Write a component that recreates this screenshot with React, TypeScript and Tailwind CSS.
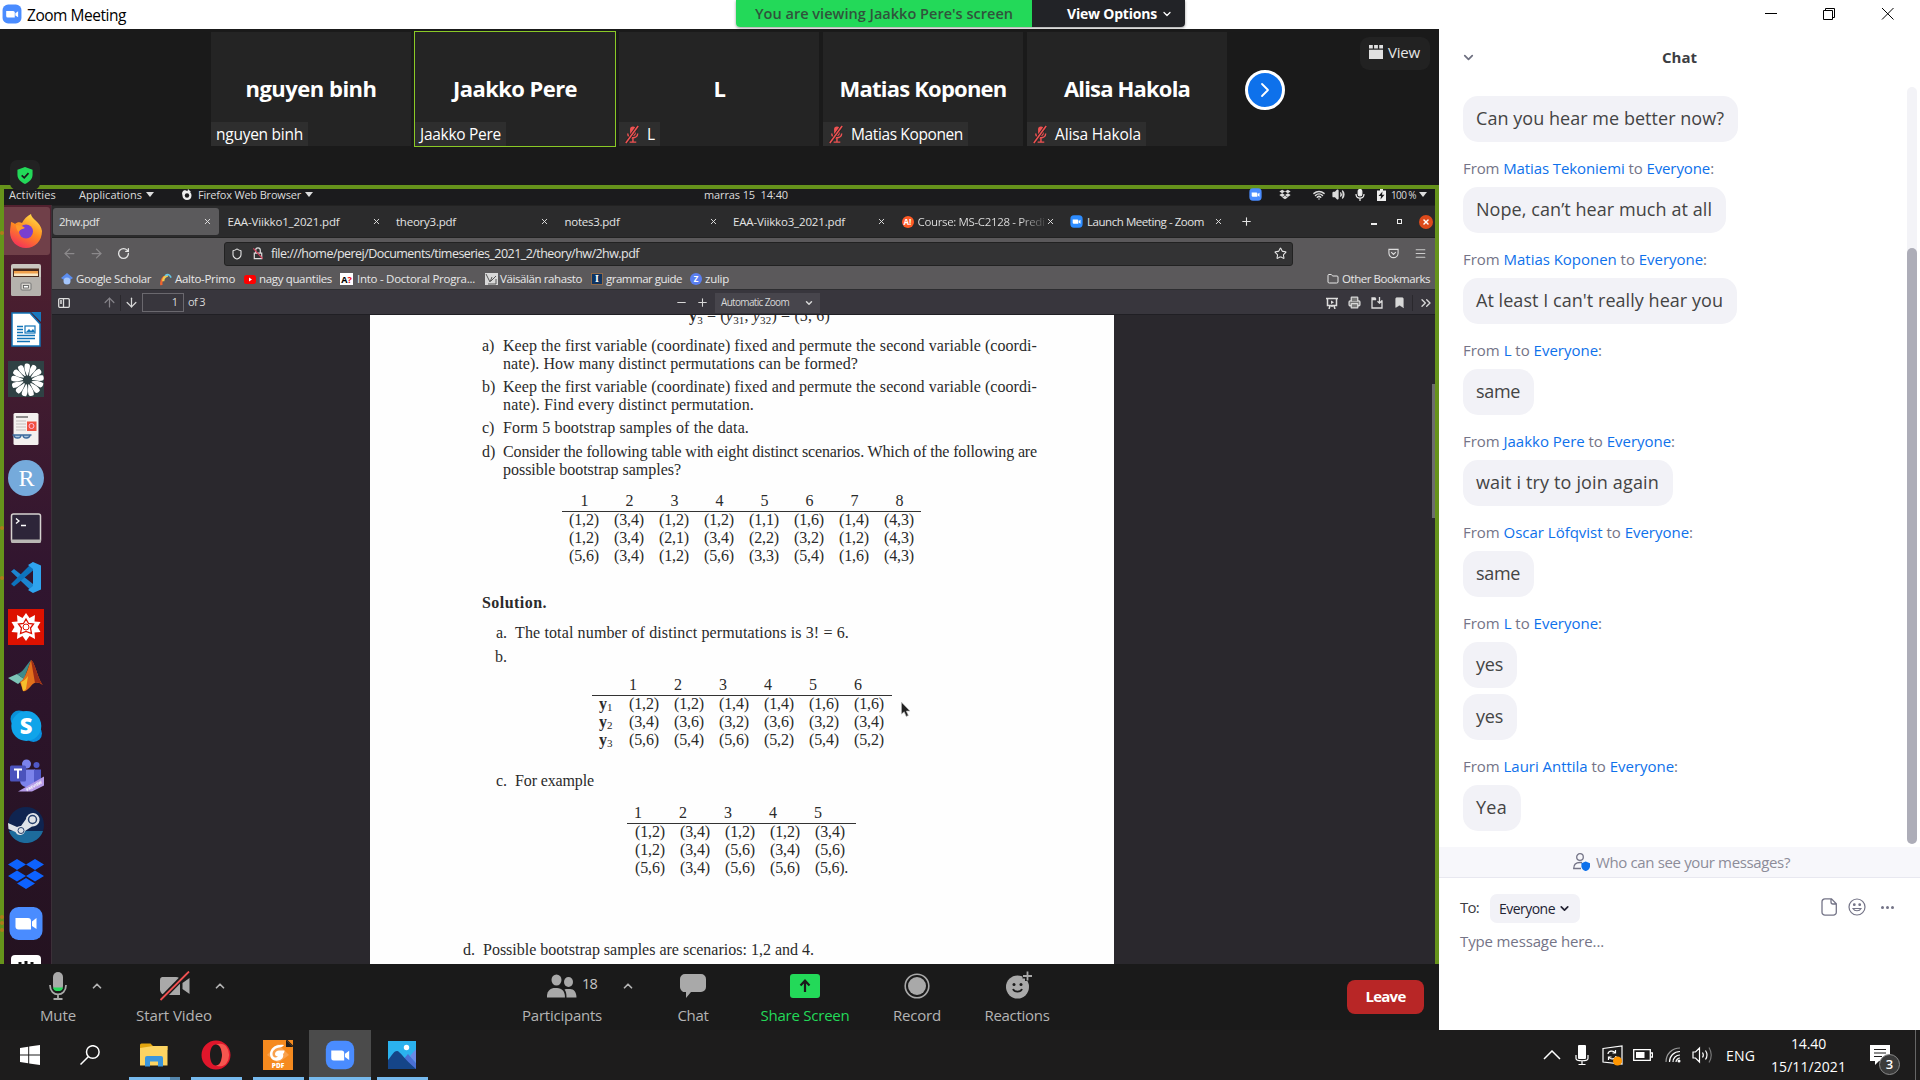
import { useLayoutEffect, useRef, type ReactNode } from "react";
import { ArrowDown, ArrowLeft, ArrowRight, ArrowUp, Bookmark, ChevronDown, ChevronUp, ChevronRight, ChevronsRight, Folder, Menu, Minus, Plus, Printer, RotateCw, Shield, Star, Volume2, Wifi, X } from "lucide-react";
import { FaDropbox } from "react-icons/fa";

/* Spreads a single line of text over the width of its box. */
function Fit({ className = "", children }: { className?: string; children: ReactNode }) {
  const box = useRef<HTMLSpanElement>(null);
  const line = useRef<HTMLSpanElement>(null);
  useLayoutEffect(() => {
    const b = box.current;
    const l = line.current;
    if (!b || !l) return;
    l.style.letterSpacing = "0px";
    const n = (l.textContent ?? "").length || 1;
    l.style.letterSpacing = `${(b.getBoundingClientRect().width - l.getBoundingClientRect().width) / n}px`;
  }, [children]);
  return (
    <span ref={box} className={`inline-block shrink-0 whitespace-nowrap text-left ${className}`}>
      <span ref={line} className="inline-block whitespace-pre">{children}</span>
    </span>
  );
}

function ZoomLogo({ className = "", color = "#4a8cff" }: { className?: string; color?: string }) {
  return (
    <svg viewBox="0 0 36 36" className={`shrink-0 ${className}`}>
      <rect x="1" y="1" width="34" height="34" rx="10" fill={color} />
      <path d="M7.500 12.500h12.500a3 3 0 0 1 3 3v9h-12.500a3 3 0 0 1-3-3z" fill="#fff" />
      <path d="M24 16.500l5-3.500v11l-5-3.500z" fill="#fff" />
    </svg>
  );
}

function MutedMic() {
  return (
    <svg viewBox="0 0 16 20" className="h-[19px] w-4 shrink-0">
      <rect x="6" y="1.500" width="6" height="10" rx="3" fill="#f05252" />
      <path d="M3.500 9c0 6 10.500 6 10.500 0M9 14v3.500M5.500 18h7" stroke="#f05252" strokeWidth="1.500" fill="none" />
      <path d="M14.500 1L1.500 19" stroke="#242424" strokeWidth="3.500" />
      <path d="M14.500 1L1.500 19" stroke="#f05252" strokeWidth="1.600" />
    </svg>
  );
}

const tiles = [
  { name: "nguyen binh", big: "w-[131px]", small: "w-[87px]", muted: false, active: false },
  { name: "Jaakko Pere", big: "w-[124px]", small: "w-[81px]", muted: false, active: true },
  { name: "L", big: "w-[11px]", small: "w-[8px]", muted: true, active: false },
  { name: "Matias Koponen", big: "w-[167px]", small: "w-[112px]", muted: true, active: false },
  { name: "Alisa Hakola", big: "w-[126px]", small: "w-[86px]", muted: true, active: false },
];

function TitleBar() {
  return (
    <header className="flex h-[29px] w-full items-start bg-white">
      <ZoomLogo className="ml-[2px] mt-[4px] h-5 w-5" />
      <Fit className="ml-[5px] mt-[4px] w-[99px] text-[15.5px] leading-[22px] text-black">Zoom Meeting</Fit>
      <div className="ml-[610px] flex h-[27px] w-[449px] shrink-0 overflow-hidden rounded-b-[4px] shadow-[0_1px_3px_rgba(0,0,0,0.4)]">
        <div className="flex w-[296px] items-center justify-center bg-[#23d959]">
          <Fit className="w-[258px] text-[14.5px] font-semibold text-[#30543c]">You are viewing Jaakko Pere's screen</Fit>
        </div>
        <div className="flex flex-1 items-center bg-[#222327] text-white">
          <Fit className="ml-[35px] w-[90px] text-[14px] font-bold">View Options</Fit>
          <ChevronDown className="ml-[4px] h-3 w-3" strokeWidth={2.5} />
        </div>
      </div>
      <svg viewBox="0 0 132 14" className="ml-[579px] mt-[7px] h-[14px] w-[132px] shrink-0" fill="none" stroke="#000" strokeWidth="1">
        <path d="M1 6.500h12M59.500 3.500h9v9h-9zM61.500 3.500v-2h9v9h-2M118 1l11.500 11.500M129.500 1L118 12.500" />
      </svg>
    </header>
  );
}

function Gallery() {
  return (
    <div className="flex h-[156px] items-start pl-[211px]">
      <div className="mt-[3px] flex gap-1">
        {tiles.map((t) => (
          <div key={t.name} className={`flex h-[114px] w-[200px] flex-col bg-[#242424] ${t.active ? "outline outline-1 outline-[#8ac926]" : ""}`}>
            <div className="flex h-[90px] items-center justify-center pt-[22px]">
              <Fit className={`text-[22px] font-bold leading-[30px] text-white ${t.big}`}>{t.name}</Fit>
            </div>
            <div className="flex h-6 items-center gap-[7px] self-start bg-[#2e2e2e] px-[5px] text-[15.5px] leading-6 text-white">
              {t.muted && <MutedMic />}
              <Fit className={t.small}>{t.name}</Fit>
            </div>
          </div>
        ))}
      </div>
      <div className="ml-[18px] mt-[41px] flex h-10 w-10 shrink-0 items-center justify-center rounded-full border-[3.500px] border-white bg-[#0e71eb]">
        <ChevronRight className="h-6 w-6 text-white" strokeWidth={1.8} />
      </div>
      <div className="ml-[75px] mt-[8px] flex h-[33px] w-[70px] items-center rounded-[9px] bg-[#222] pb-[3px] pl-[9px]">
        <svg viewBox="0 0 14 14" className="h-[14px] w-[14px] shrink-0 fill-[#e0e0e0]">
          <path d="M0 0h3.800v3.500h-3.800zM5.100 0h3.800v3.500h-3.800zM10.200 0h3.800v3.500h-3.800zM0 4.700h14v9.300h-14z" />
        </svg>
        <Fit className="ml-[5px] w-[32px] text-[15px] text-[#e6e6e6]">View</Fit>
      </div>
    </div>
  );
}

function Caret({ className = "" }: { className?: string }) {
  return (
    <svg viewBox="0 0 8 5" className={`h-[5px] w-2 shrink-0 fill-[#dedede] ${className}`}>
      <path d="M0 0h8l-4 5z" />
    </svg>
  );
}

function TopPanel() {
  return (
    <div className="flex h-4 items-center bg-[#1b1b1d] pb-[5px] text-[11px] leading-[14px] text-[#dcdcdc]">
      <Fit className="ml-[5px] w-[47px]">Activities</Fit>
      <Fit className="ml-[23px] w-[63px]">Applications</Fit>
      <Caret className="ml-[4px]" />
      <svg viewBox="0 0 12 12" className="ml-[27px] h-[12px] w-[12px] shrink-0">
        <path d="M1 4C3-.5 5 2 6 2c3 .5 4.500 2 4.500 4.500 0 3-2 4.500-4.500 4.500s-4.500-2-4.500-4z" fill="#eee" />
        <circle cx="6" cy="6.500" r="2.200" fill="#1b1b1d" />
        <path d="M7 0l3 3-4 1z" fill="#eee" />
      </svg>
      <Fit className="ml-[5px] w-[103px]">Firefox Web Browser</Fit>
      <Caret className="ml-[4px]" />
      <Fit className="ml-[391px] w-[84px]">marras 15  14:40</Fit>
      <ZoomLogo className="ml-[461px] h-[13px] w-[13px]" />
      <FaDropbox className="ml-[17px] h-[11px] w-[12px] shrink-0" />
      <Wifi className="ml-[22px] h-3 w-3 shrink-0" strokeWidth={3} />
      <Volume2 className="ml-[7px] h-[13px] w-[13px] shrink-0 fill-current" strokeWidth={2.5} />
      <svg viewBox="0 0 10 12" className="ml-[10px] h-3 w-[10px] shrink-0" fill="none" stroke="#eee" strokeWidth="1.200">
        <rect x="3.200" y=".5" width="3.600" height="6.500" rx="1.800" fill="#eee" />
        <path d="M1 5c0 5.500 8 5.500 8 0M5 9v3" />
      </svg>
      <svg viewBox="0 0 9 12" className="ml-[12px] h-3 w-[9px] shrink-0">
        <path d="M3 0h3v1.500h3v10.500h-9v-10.500h3z" fill="#eee" />
        <path d="M5.500 2.500l-4 4.500h2.500l-.5 3.500 4-4.700h-2.500z" fill="#1b1b1d" />
      </svg>
      <Fit className="ml-[5px] w-[25px] text-[10px]">100 %</Fit>
      <Caret className="ml-[3px]" />
    </div>
  );
}

const tabs = [
  { title: "2hw.pdf", w: "w-[40px]", icon: "", on: true },
  { title: "EAA-Viikko1_2021.pdf", w: "w-[112px]", icon: "", on: false },
  { title: "theory3.pdf", w: "w-[60px]", icon: "", on: false },
  { title: "notes3.pdf", w: "w-[55px]", icon: "", on: false },
  { title: "EAA-Viikko3_2021.pdf", w: "w-[112px]", icon: "", on: false },
  { title: "Course: MS-C2128 - Predi", w: "w-[127px]", icon: "aalto", on: false },
  { title: "Launch Meeting - Zoom", w: "w-[117px]", icon: "zoom", on: false },
];

function TabStrip() {
  return (
    <div className="flex h-[33px] items-center border-b border-t border-[#222] bg-[#2b2b2c] pl-[1px]">
      {tabs.map((t, i) => (
        <div key={i} className={`mr-[2.500px] flex h-[27px] w-[166px] shrink-0 items-center rounded-[3px] pl-[6px] pr-[7px] text-[11.5px] text-[#e3e3e3] ${t.on ? "bg-[#5b5a5c]" : ""}`}>
          {t.icon === "aalto" && <span className="mr-[4px] flex h-3 w-3 shrink-0 items-center justify-center rounded-full bg-[#ff5a26] text-[8px] font-bold text-white">A!</span>}
          {t.icon === "zoom" && <ZoomLogo color="#2d8cff" className="mr-[4px] h-[13px] w-[13px]" />}
          <Fit className={t.icon === "aalto" ? `${t.w} bg-gradient-to-r from-[#e3e3e3] from-80% to-[#444] bg-clip-text text-transparent` : t.w}>{t.title}</Fit>
          <X className="ml-auto h-[9px] w-[9px] shrink-0" strokeWidth={2.5} />
        </div>
      ))}
      <Plus className="ml-[7px] h-[13px] w-[13px] shrink-0 text-[#e3e3e3]" strokeWidth={2} />
      <span className="ml-[118px] mt-[5px] h-[2px] w-[6px] shrink-0 bg-[#eee]" />
      <span className="ml-[20px] h-[5px] w-[5px] shrink-0 border-[1.500px] border-[#eee]" />
      <span className="ml-[17px] flex h-[14px] w-[14px] shrink-0 items-center justify-center rounded-full bg-[#dd4a1b]">
        <X className="h-[8px] w-[8px] text-white" strokeWidth={4.5} />
      </span>
    </div>
  );
}

function NavBar() {
  return (
    <div className="flex h-[29px] items-center bg-[#5b595b] pt-[2px] text-[#e5e5e5]">
      <ArrowLeft className="ml-[10px] h-[15px] w-[15px] shrink-0 text-[#8b898b]" strokeWidth={2} />
      <ArrowRight className="ml-[12px] h-[15px] w-[15px] shrink-0 text-[#8b898b]" strokeWidth={2} />
      <RotateCw className="ml-[13px] h-[13px] w-[13px] shrink-0" strokeWidth={2.4} />
      <div className="ml-[94px] flex h-6 w-[1069px] shrink-0 items-center rounded-[3px] border border-[#222] bg-[#333334]">
        <Shield className="ml-[6px] h-[12px] w-[12px] shrink-0" strokeWidth={2.2} />
        <svg viewBox="0 0 12 14" className="ml-[9px] h-[13px] w-3 shrink-0" fill="none" strokeWidth="1.300">
          <path d="M2 6.500h8v6h-8zM3.500 6v-2.500a2.500 2.500 0 0 1 5 0v2.500" stroke="#ddd" />
          <path d="M1 1.500l10 11" stroke="#d2405a" />
        </svg>
        <Fit className="ml-[7px] w-[368px] text-[12.5px] leading-[16px]">file:///home/perej/Documents/timeseries_2021_2/theory/hw/2hw.pdf</Fit>
        <Star className="ml-auto mr-[5px] h-[13px] w-[13px] shrink-0" strokeWidth={2} />
      </div>
      <svg viewBox="0 0 12 12" className="ml-[95px] h-[11px] w-[11px] shrink-0" fill="none" stroke="#ddd" strokeWidth="1.200">
        <path d="M1 1.500h10v4a5 5 0 0 1-10 0zM3.500 4.500l2.500 2.500 2.500-2.500" />
      </svg>
      <Menu className="ml-[15px] h-[13px] w-[13px] shrink-0 text-[#ccc]" strokeWidth={2} />
    </div>
  );
}

function Bookmarks() {
  return (
    <div className="flex h-[23px] items-center border-b border-[#2d2d30] bg-[#5b595b] pt-[2px] text-[11.5px] leading-[14px] text-[#e8e8e8]">
      <svg viewBox="0 0 12 12" className="ml-[9px] h-3 w-3 shrink-0">
        <path d="M6 0l6 5-6 4-6-4z" fill="#5b8def" />
        <circle cx="6" cy="8" r="3.500" fill="#a4c5fb" />
      </svg>
      <Fit className="ml-[3px] w-[75px]">Google Scholar</Fit>
      <svg viewBox="0 0 14 14" className="ml-[8px] h-[13px] w-[14px] shrink-0" fill="none" strokeWidth="2.500">
        <path d="M2 13c-.5-4 1-7 3-9" stroke="#f0642f" />
        <path d="M4 9c0-4 3-6 5-6.500" stroke="#f3c94e" />
        <path d="M6 3c3-2.500 5-1 6.500 2" stroke="#65c8e8" strokeWidth="1.800" />
      </svg>
      <Fit className="ml-[2px] w-[60px]">Aalto-Primo</Fit>
      <svg viewBox="0 0 12 9" className="ml-[9px] h-[9px] w-3 shrink-0">
        <rect width="12" height="9" rx="2.500" fill="#f00" />
        <path d="M5 2.500l3 2-3 2z" fill="#fff" />
      </svg>
      <Fit className="ml-[3px] w-[73px]">nagy quantiles</Fit>
      <span className="ml-[8px] flex h-3 w-[13px] shrink-0 items-center justify-center bg-white text-[9px] font-bold leading-none text-black">A<span className="text-red-600">?</span></span>
      <Fit className="ml-[4px] w-[118px]">Into - Doctoral Progra...</Fit>
      <svg viewBox="0 0 13 12" className="ml-[10px] h-3 w-[13px] shrink-0">
        <rect width="13" height="12" fill="#d8d8d8" />
        <path d="M1 1l4 8 2-5M6 8l5-5M3 11h8V6" stroke="#555" fill="none" />
      </svg>
      <Fit className="ml-[2px] w-[82px]">Väisälän rahasto</Fit>
      <span className="ml-[9px] flex h-3 w-3 shrink-0 items-center justify-center border border-[#8f6a4a] bg-[#0f3460] font-['Liberation_Serif'] text-[10px] font-bold leading-none text-white">I</span>
      <Fit className="ml-[3px] w-[76px]">grammar guide</Fit>
      <span className="ml-[8px] flex h-3 w-3 shrink-0 items-center justify-center rounded-full bg-[#5b7ff0] text-[8px] font-bold leading-none text-white">Z</span>
      <Fit className="ml-[3px] w-[24px]">zulip</Fit>
      <Folder className="ml-[598px] h-3 w-3 shrink-0" strokeWidth={2} />
      <Fit className="ml-[3px] w-[88px]">Other Bookmarks</Fit>
    </div>
  );
}

function PdfToolbar() {
  return (
    <div className="flex h-[25px] items-center border-b border-[#201f24] bg-[#38363d] pt-px text-[11px] text-[#d8d8d8]">
      <svg viewBox="0 0 12 10" className="ml-[6px] h-[10px] w-3 shrink-0" fill="none" stroke="#ddd" strokeWidth="1.300">
        <rect x=".7" y=".7" width="10.600" height="8.600" rx="1" />
        <path d="M5.500 1v8M2 3h2M2 5h2" />
      </svg>
      <ArrowUp className="ml-[32px] h-[15px] w-[15px] shrink-0 text-[#858389]" strokeWidth={2} />
      <span className="mx-[3px] h-4 w-px shrink-0 bg-[#2a282d]" />
      <ArrowDown className="h-[15px] w-[15px] shrink-0" strokeWidth={2} />
      <div className="ml-[3px] flex h-[19px] w-[42px] shrink-0 items-center justify-end border border-[#6a686e] pr-[5px]">1</div>
      <Fit className="ml-[4px] w-[17px]">of 3</Fit>
      <Minus className="ml-[470px] h-[13px] w-[13px] shrink-0" strokeWidth={2} />
      <Plus className="ml-[8px] h-[13px] w-[13px] shrink-0" strokeWidth={2} />
      <div className="ml-[6px] flex h-[20px] w-[105px] shrink-0 items-center bg-[#47454c] pl-[6px] text-[10px]">
        <Fit className="w-[68px]">Automatic Zoom</Fit>
        <ChevronDown className="ml-[15px] h-[10px] w-[10px]" strokeWidth={3.5} />
      </div>
      <svg viewBox="0 0 12 12" className="ml-[506px] h-3 w-3 shrink-0" fill="none" stroke="#ddd" strokeWidth="1.500">
        <path d="M0 1.500h12M1.500 2v6.500h9v-6.500M6 8.500v1.500M3 12l1-3M9 12l-1-3" />
        <path d="M5 3.500l3 1.800-3 1.800z" fill="#ddd" stroke="none" />
      </svg>
      <Printer className="ml-[10px] h-[13px] w-[13px] shrink-0 fill-[#777]" strokeWidth={2.4} />
      <svg viewBox="0 0 12 12" className="ml-[10px] h-3 w-3 shrink-0" fill="none" stroke="#ddd" strokeWidth="1.300">
        <path d="M5 2.500h-4v8.500h10v-7h-1M1 2.500v-1.500h3l1 1.500M8.500 0v6M6.500 4.200l2 2 2-2" />
      </svg>
      <Bookmark className="ml-[10px] h-[13px] w-[13px] shrink-0 fill-current" strokeWidth={1} />
      <span className="ml-[6px] h-4 w-px shrink-0 bg-[#2a282d]" />
      <ChevronsRight className="ml-[5px] h-4 w-4 shrink-0" strokeWidth={2} />
    </div>
  );
}

function Line({ label, indent, children }: { label: string; indent: string; children?: ReactNode }) {
  return (
    <div className={`flex h-[18px] ${indent}`}>
      <span className="w-[13px] shrink-0">{label}</span>
      {children}
    </div>
  );
}

function Cell({ children }: { children: string }) {
  return (
    <span className="w-[45px] shrink-0">
      <Fit className={children.endsWith(".") ? "w-[33px]" : "w-[30px]"}>{children}</Fit>
    </span>
  );
}

function DataRow({ label, cells }: { label?: string; cells: string[] }) {
  return (
    <div className="flex h-[18px]">
      {label && (
        <span className="w-[30px] shrink-0 font-bold">
          y<sub className="bottom-[-0.200em] text-[11px] font-normal">{label}</sub>
        </span>
      )}
      {cells.map((c, i) => <Cell key={i}>{c}</Cell>)}
    </div>
  );
}

const scenarios = [
  ["(1,2)", "(3,4)", "(1,2)", "(1,2)", "(1,1)", "(1,6)", "(1,4)", "(4,3)"],
  ["(1,2)", "(3,4)", "(2,1)", "(3,4)", "(2,2)", "(3,2)", "(1,2)", "(4,3)"],
  ["(5,6)", "(3,4)", "(1,2)", "(5,6)", "(3,3)", "(5,4)", "(1,6)", "(4,3)"],
];
const permutations = [
  ["(1,2)", "(1,2)", "(1,4)", "(1,4)", "(1,6)", "(1,6)"],
  ["(3,4)", "(3,6)", "(3,2)", "(3,6)", "(3,2)", "(3,4)"],
  ["(5,6)", "(5,4)", "(5,6)", "(5,2)", "(5,4)", "(5,2)"],
];
const samples = [
  ["(1,2)", "(3,4)", "(1,2)", "(1,2)", "(3,4)"],
  ["(1,2)", "(3,4)", "(5,6)", "(3,4)", "(5,6)"],
  ["(5,6)", "(3,4)", "(5,6)", "(5,6)", "(5,6)."],
];

function PdfPage() {
  return (
    <div className="flex h-full w-[744px] flex-col overflow-hidden bg-[#fefefe] font-['Liberation_Serif',serif] text-[16px] leading-[18px] text-[#2a2a2a]">
      <div className="-mt-[8px] h-[18px] pl-[319px]">
        <Fit className="w-[141px]"><b>y</b><sub className="text-[11px]">3</sub> = (<i>y</i><sub className="text-[11px]">31</sub>, <i>y</i><sub className="text-[11px]">32</sub>) = (5, 6)</Fit>
      </div>
      <div className="mt-[12px]">
        <Line label="a)" indent="pl-[112px]"><Fit className="ml-[8px] w-[534px]">Keep the first variable (coordinate) fixed and permute the second variable (coordi-</Fit></Line>
        <Line label="" indent="pl-[112px]"><Fit className="ml-[8px] w-[355px]">nate). How many distinct permutations can be formed?</Fit></Line>
      </div>
      <div className="mt-[5px]">
        <Line label="b)" indent="pl-[112px]"><Fit className="ml-[8px] w-[534px]">Keep the first variable (coordinate) fixed and permute the second variable (coordi-</Fit></Line>
        <Line label="" indent="pl-[112px]"><Fit className="ml-[8px] w-[251px]">nate). Find every distinct permutation.</Fit></Line>
      </div>
      <div className="mt-[5px]">
        <Line label="c)" indent="pl-[112px]"><Fit className="ml-[8px] w-[246px]">Form 5 bootstrap samples of the data.</Fit></Line>
      </div>
      <div className="mt-[6px]">
        <Line label="d)" indent="pl-[112px]"><Fit className="ml-[8px] w-[534px]">Consider the following table with eight distinct scenarios. Which of the following are</Fit></Line>
        <Line label="" indent="pl-[112px]"><Fit className="ml-[8px] w-[178px]">possible bootstrap samples?</Fit></Line>
      </div>

      <div className="ml-[192px] mt-[13px] w-[359px]">
        <div className="flex h-5 border-b border-[#333]">
          {[1, 2, 3, 4, 5, 6, 7, 8].map((n) => <span key={n} className="w-[45px] shrink-0 text-center">{n}</span>)}
        </div>
        <div className="-mt-px pl-[7px]">
          {scenarios.map((r, i) => <DataRow key={i} cells={r} />)}
        </div>
      </div>

      <Fit className="ml-[112px] mt-[29px] w-[65px] font-bold">Solution.</Fit>
      <div className="mt-[12px]">
        <Line label="a." indent="pl-[126px]"><Fit className="ml-[6px] w-[334px]">The total number of distinct permutations is 3! = 6.</Fit></Line>
      </div>
      <div className="mt-[6px]"><Line label="b." indent="pl-[125px]" /></div>

      <div className="ml-[222px] mt-[10px] w-[300px]">
        <div className="flex h-5 border-b border-[#333] pl-[37px]">
          {[1, 2, 3, 4, 5, 6].map((n) => <span key={n} className="w-[45px] shrink-0">{n}</span>)}
        </div>
        <div className="-mt-px pl-[7px]">
          {permutations.map((r, i) => <DataRow key={i} label={String(i + 1)} cells={r} />)}
        </div>
      </div>

      <div className="mt-[23px]">
        <Line label="c." indent="pl-[126px]"><Fit className="ml-[6px] w-[79px]">For example</Fit></Line>
      </div>

      <div className="ml-[257px] mt-[14px] w-[229px]">
        <div className="flex h-[20px] border-b border-[#333] pl-[7px]">
          {[1, 2, 3, 4, 5].map((n) => <span key={n} className="w-[45px] shrink-0">{n}</span>)}
        </div>
        <div className="-mt-px pl-[8px]">
          {samples.map((r, i) => <DataRow key={i} cells={r} />)}
        </div>
      </div>

      <div className="mt-[64px]">
        <Line label="d." indent="pl-[93px]"><Fit className="ml-[7px] w-[331px]">Possible bootstrap samples are scenarios: 1,2 and 4.</Fit></Line>
      </div>
    </div>
  );
}

const petals = Array.from({ length: 13 }, (_, i) => (i * 360) / 13);

const dockIcons: { id: string; art: ReactNode }[] = [
  {
    id: "files",
    art: (
      <>
        <rect x="3" y="2" width="30" height="32" rx="2" fill="#c9c6c0" />
        <rect x="5" y="6.500" width="26" height="9" fill="#4a2a1c" />
        <path d="M6 9h24v5h-24z" fill="#f0a04c" />
        <path d="M6 11.500h24v2.500h-24z" fill="#f8e6c4" />
        <path d="M3 15h30v17a2 2 0 0 1-2 2h-26a2 2 0 0 1-2-2z" fill="#b5b2ad" />
        <rect x="13" y="21" width="10" height="7" rx="1" fill="#d6d3ce" stroke="#777" />
        <rect x="15.500" y="23.500" width="5" height="2.500" fill="#fff" stroke="#555" strokeWidth=".8" />
      </>
    ),
  },
  {
    id: "writer",
    art: (
      <>
        <path d="M4 1h18l10 11v22h-28z" fill="#fff" stroke="#1274b8" strokeWidth="1.500" />
        <path d="M23 0h10v10z" fill="#1878bd" />
        <path d="M9 14.500h6M9 17.500h6M9 20.500h6M9 23.500h18M9 26.500h18M9 29.500h13" stroke="#1274b8" strokeWidth="1.300" />
        <rect x="17" y="14" width="10" height="7" fill="#fff" stroke="#1274b8" strokeWidth="1.200" />
        <path d="M18 20l3-3 2 2 2-2 2 3z" fill="#1274b8" />
      </>
    ),
  },
  {
    id: "pinwheel",
    art: (
      <>
        <rect width="36" height="36" fill="#2f4144" />
        {petals.map((a) => <path key={a} d="M19 14.500C17.500 11 15.500 7 17 3c3-1 5 0 5 2 0 4-1.500 6-2 9.500z" transform={`rotate(${a} 19.500 19)`} fill="#fff" />)}
      </>
    ),
  },
  {
    id: "reader",
    art: (
      <>
        <rect x="5.500" y="2" width="25" height="32" rx="1.500" fill="#f4f1ef" />
        <path d="M8 6h12" stroke="#555" strokeWidth="1.300" />
        <path d="M8 10h10M8 13h10M8 16h10M8 19h10" stroke="#dcd8d6" strokeWidth="2" />
        <rect x="19" y="10.500" width="9.500" height="9.500" fill="#f0503f" />
        <circle cx="23.500" cy="15" r="2.500" fill="none" stroke="#fbd" strokeWidth="1" />
        <path d="M4.500 24h19M6 24a3.500 3 0 0 0 7 0zM15 24a3.500 3 0 0 0 7 0z" stroke="#3d6a9c" strokeWidth="1.400" fill="#a7c4de" />
      </>
    ),
  },
  {
    id: "r",
    art: (
      <>
        <circle cx="18" cy="18" r="18" fill="#75aadb" />
        <text x="18.500" y="25.500" textAnchor="middle" fontFamily="Liberation Serif" fontSize="24" fill="#fff">R</text>
      </>
    ),
  },
  {
    id: "terminal",
    art: (
      <>
        <rect x="3.500" y="4" width="29" height="28" rx="2" fill="#2d2539" stroke="#d5d2cf" strokeWidth="1.500" />
        <path d="M3 29.500h30v2a1.500 1.500 0 0 1-1.500 1.500h-27a1.500 1.500 0 0 1-1.500-1.500z" fill="#bab7b4" />
        <path d="M8 8.500l3 2.500-3 2.500M13 15.500h5" stroke="#fff" strokeWidth="1.300" fill="none" />
      </>
    ),
  },
  {
    id: "code",
    art: (
      <>
        <path d="M3 12.500l3-2.500 19 15v8.500z" fill="#1c85d0" />
        <path d="M3 25l3 2.500 19-16v-8.500z" fill="#0d73bd" />
        <path d="M25 3l8 3.500v24l-8 3.500-5-3 5-4v-17l-5-4z" fill="#2fa3ee" />
      </>
    ),
  },
  {
    id: "star",
    art: (
      <>
        <rect width="36" height="36" fill="#dd1100" />
        <path d="M18 4l3.500 5 5.500-3-.5 6.500 6 .5-3 5 3 5-6 .5.5 6.500-5.500-3-3.500 5-3.500-5-5.500 3 .5-6.500-6-.5 3-5-3-5 6-.5-.5-6.500 5.500 3z" fill="#fff" />
        <path d="M18 10l2.500 4.500 5 .5-3 4 1 5.500-5.500-2-5.500 2 1-5.500-3-4 5-.5z" fill="none" stroke="#dd1100" strokeWidth="1.300" />
        <circle cx="18" cy="18" r="3" fill="none" stroke="#dd1100" />
      </>
    ),
  },
  {
    id: "matlab",
    art: (
      <>
        <path d="M0 20l9-4 7 5-6 5z" fill="#7cc4b8" />
        <path d="M9 16c6-1 9-9 14-14l-7 19z" fill="#3f8a8a" />
        <path d="M23 2c4 2 7 20 12 25-6-4-9-3-12 1-3 3-5 6-8 5l-3-9c5-2 8-14 11-22z" fill="#e2701c" />
        <path d="M23 2c4 2 7 20 12 25-4-3-6-3-8-2z" fill="#9c2b16" />
        <path d="M13 24c3-1 5-3 7-6l-2 13c-1 1-2 2-3 2z" fill="#f6c02c" />
      </>
    ),
  },
  {
    id: "skype",
    art: (
      <>
        <circle cx="11" cy="11" r="8.500" fill="#0a8fd8" />
        <circle cx="25.500" cy="25.500" r="8.500" fill="#0a8fe0" />
        <circle cx="18.300" cy="18" r="15" fill="#10a4ea" />
        <text x="18" y="26" textAnchor="middle" fontFamily="Open Sans" fontWeight="800" fontSize="22" fill="#fff">S</text>
      </>
    ),
  },
  {
    id: "teams",
    art: (
      <g transform="translate(0 1.500)">
        <circle cx="18.500" cy="5.500" r="4.500" fill="#7b83eb" />
        <circle cx="28.500" cy="6.500" r="3" fill="#5059c9" />
        <path d="M12 11h15v11c0 9-15 9-15 0z" fill="#7b83eb" />
        <path d="M26 11h7v11c0 5-7 5-7 0z" fill="#5059c9" />
        <rect x="2" y="7" width="16" height="16" rx="1.500" fill="#4b53bc" />
        <path d="M6 11h8M10 11v9" stroke="#fff" strokeWidth="2" />
        <path d="M10 33l26-15v9l-12 6z" fill="#b59be8" />
        <text x="19" y="33" transform="rotate(-29 19 33)" fontFamily="Open Sans" fontWeight="700" fontSize="4" fill="#fff">PREVIEW</text>
      </g>
    ),
  },
  {
    id: "steam",
    art: (
      <>
        <circle cx="18" cy="18" r="18" fill="#0f2450" />
        <path d="M1 24a18 18 0 0 0 34 0z" fill="#1d6b9c" />
        <path d="M0 16l9 4c2-1 3-1 4-1l5-7a6.800 6.800 0 1 1 6 7.500l-7 4.500a5 5 0 0 1-9.500 1l-7-3z" fill="#dfe3e8" />
        <circle cx="24.500" cy="12.500" r="4" fill="#dfe3e8" stroke="#26406c" strokeWidth="1.500" />
        <circle cx="13" cy="23.500" r="3" fill="none" stroke="#26406c" />
      </>
    ),
  },
  {
    id: "dropbox",
    art: <path d="M9 3l9 5.500-9 5.500-9-5.500zM27 3l9 5.500-9 5.500-9-5.500zM9 14.500l9 5.500-9 5.500-9-5.500zM27 14.500l9 5.500-9 5.500-9-5.500zM18 22l9 5.500-9 5.500-9-5.500z" fill="#0d62fe" />,
  },
  {
    id: "zoom",
    art: (
      <>
        <rect x="1.500" y="1" width="33" height="33" rx="9" fill="#4a8cff" />
        <path d="M7.500 12h12.500a3 3 0 0 1 3 3v8.500h-12.500a3 3 0 0 1-3-3z" fill="#fff" />
        <path d="M24 15.500l4.500-3.500v11l-4.500-3z" fill="#fff" />
      </>
    ),
  },
  {
    id: "last",
    art: (
      <>
        <rect x="3" y="0" width="30" height="36" rx="4" fill="#fff" />
        <path d="M12 7v6M18 6v6M24 7v6" stroke="#111" strokeWidth="3" />
      </>
    ),
  },
];

function Dock() {
  return (
    <aside className="flex w-[48px] shrink-0 flex-col overflow-hidden border-r border-[#3b3038] bg-gradient-to-b from-[#52212f] via-[#30152f] via-50% to-[#241220]">
      <div className="mt-[2px] flex h-[48px] w-[46px] shrink-0 items-center justify-center rounded-r-[3px] bg-[#704049] pr-[3px]">
        <svg viewBox="0 0 36 36" className="h-9 w-9">
          <defs>
            <linearGradient id="flame" x1="0.8" y1="0" x2="0.3" y2="1">
              <stop offset="0" stopColor="#ffe14a" />
              <stop offset=".5" stopColor="#ff8a1f" />
              <stop offset="1" stopColor="#f5305a" />
            </linearGradient>
          </defs>
          <path d="M3 9c1 0 3 1 4 2 2-2 5-2 7-1 2-4 5-7 9-9 0 5 10 8 11 17 0 10-7 17-16 17s-16-7-16-16c0-4 1-7 1-10z" fill="url(#flame)" />
          <circle cx="18" cy="18.500" r="7" fill="#7a3fd0" />
          <path d="M8 12c4 0 7 1 9 3-2 1-5 1-6 4-2-1-3-4-3-7z" fill="#ff9a2c" />
        </svg>
      </div>
      <div className="flex flex-col items-center gap-[13.500px] pr-[4px] pt-[7px]">
        {dockIcons.map((d) => (
          <svg key={d.id} viewBox="0 0 36 36" className="h-9 w-9 shrink-0">{d.art}</svg>
        ))}
      </div>
    </aside>
  );
}

function SharedScreen() {
  return (
    <div className="relative h-[779px] border-x-4 border-t-4 border-[#66931b] bg-[#2a282d]">
      <TopPanel />
      <div className="flex h-[759px]">
        <Dock />
        <div className="flex min-w-0 flex-1 flex-col overflow-hidden">
          <TabStrip />
          <NavBar />
          <Bookmarks />
          <PdfToolbar />
          <div className="flex h-[649px] pl-[318px]">
            <PdfPage />
            <div className="ml-auto mt-[69px] h-[134px] w-[3px] bg-[#6d6d6d]" />
          </div>
        </div>
      </div>
      <div className="absolute left-[6px] top-[-29px] flex h-[30px] w-[30px] items-center justify-center rounded-[7px] bg-[#222]">
        <svg viewBox="0 0 16 18" className="h-[17px] w-4">
          <path d="M8 0l8 3v5c0 5-3.500 8-8 10-4.500-2-8-5-8-10v-5z" fill="#23d959" />
          <path d="M4.500 8.800l2.700 2.700 4.500-5" stroke="#1a1a1a" strokeWidth="1.800" fill="none" />
        </svg>
      </div>
      <svg viewBox="0 0 12 18" className="absolute left-[897px] top-[512px] h-[17px] w-[11px]">
        <path d="M.5 1v13l3-2.500 2.200 5 2.300-1-2.200-4.800h4z" fill="#222" stroke="#bbb" strokeWidth=".7" />
      </svg>
      <span className="absolute left-[-4px] top-[42px] h-1 w-1 rounded-full bg-[#b07a1a]" />
      <span className="absolute left-[-4px] top-[337px] h-1 w-1 rounded-full bg-[#b07a1a]" />
      <span className="absolute left-[-4px] top-[387px] h-1 w-1 rounded-full bg-[#b07a1a]" />
      <span className="absolute left-[-4px] top-[726px] h-1 w-1 rounded-full bg-[#b07a1a]" />
      <span className="absolute left-[-4px] top-[732px] h-1 w-1 rounded-full bg-[#b07a1a]" />
      <span className="absolute left-[-4px] top-[739px] h-1 w-1 rounded-full bg-[#b07a1a]" />
    </div>
  );
}

function Tool({ className, label, labelClass, children }: { className: string; label: string; labelClass: string; children: ReactNode }) {
  return (
    <div className={`flex shrink-0 flex-col items-center ${className}`}>
      <div className="mt-[5px] flex h-[34px] items-center justify-center">{children}</div>
      <Fit className={`mt-[2px] text-[15px] leading-[20px] ${labelClass}`}>{label}</Fit>
    </div>
  );
}

function MeetingToolbar() {
  return (
    <div className="flex h-[66px] items-start bg-[#1a1a1a] text-[#b4b4b4]">
      <Tool className="ml-[28px] w-[60px]" label="Mute" labelClass="w-[36px]">
        <svg viewBox="0 0 18 28" className="h-7 w-[18px]">
          <rect x="4" y="0" width="10" height="19" rx="5" fill="#a9a9a9" />
          <path d="M4 15.500h10c-.5 3-3 3.500-5 3.500s-4.500-.5-5-3.500z" fill="#23d959" />
          <path d="M1 13c0 12.500 16 12.500 16 0M9 22v4.500M4.500 27h9" stroke="#a9a9a9" strokeWidth="1.800" fill="none" />
        </svg>
      </Tool>
      <div className="mt-[15px] flex w-[18px] shrink-0 justify-center"><ChevronUp className="h-[14px] w-[14px]" strokeWidth={3} /></div>
      <Tool className="ml-[28px] w-[80px]" label="Start Video" labelClass="w-[76px]">
        <svg viewBox="0 0 32 30" className="h-[30px] w-8">
          <path d="M4 6h14a4 4 0 0 1 4 4v14h-14a6 6 0 0 1-6-5v-10a3 3 0 0 1 2-3z" fill="#a9a9a9" />
          <path d="M24.500 12l7-5v16l-7-5z" fill="#a9a9a9" />
          <path d="M30.500 .5l-28 28.500" stroke="#1a1a1a" strokeWidth="5" />
          <path d="M31 .5l-28.500 28.500" stroke="#f05252" strokeWidth="1.800" />
        </svg>
      </Tool>
      <div className="mt-[15px] flex w-[12px] shrink-0 justify-center"><ChevronUp className="h-[14px] w-[14px] shrink-0" strokeWidth={3} /></div>
      <Tool className="ml-[294px] w-[84px]" label="Participants" labelClass="w-[80px]">
        <div className="relative">
          <svg viewBox="0 0 30 24" className="h-6 w-[30px]" fill="#a9a9a9">
            <ellipse cx="9.500" cy="6" rx="5" ry="5.500" />
            <ellipse cx="21.500" cy="8" rx="4.500" ry="5" />
            <path d="M0 23.500c-.5-6 3-9.500 8-9.500h2c5 0 8 3.500 8 9.500z" />
            <path d="M19.500 23.500c0-4-.5-6-2-8 1-.5 2-.6 3-.6h2.500c4 0 6.500 3 6.500 8.600z" />
          </svg>
          <Fit className="absolute left-[35px] top-0 w-[15px] text-[14.5px] leading-[20px] text-[#c4c4c4]">18</Fit>
        </div>
      </Tool>
      <div className="ml-[18px] mt-[15px] flex w-[12px] shrink-0 justify-center"><ChevronUp className="h-[14px] w-[14px] shrink-0" strokeWidth={3} /></div>
      <Tool className="ml-[29px] w-[60px]" label="Chat" labelClass="w-[31px]">
        <svg viewBox="0 0 26 24" className="h-6 w-[26px]">
          <path d="M5 0h16a5 5 0 0 1 5 5v8a5 5 0 0 1-5 5h-10l-5 6v-6a5 5 0 0 1-6-5v-8a5 5 0 0 1 5-5z" fill="#a9a9a9" />
        </svg>
      </Tool>
      <Tool className="ml-[32px] w-[100px]" label="Share Screen" labelClass="w-[89px] text-[#23d959]">
        <svg viewBox="0 0 30 24" className="h-6 w-[30px]">
          <rect width="30" height="24" rx="3" fill="#23d959" />
          <path d="M15 18v-11M10.500 11.500l4.500-4.800 4.500 4.800" stroke="#1a1a1a" strokeWidth="2.200" fill="none" />
        </svg>
      </Tool>
      <Tool className="ml-[32px] w-[60px]" label="Record" labelClass="w-[48px]">
        <svg viewBox="0 0 26 26" className="h-[26px] w-[26px]">
          <circle cx="13" cy="13" r="11.800" fill="none" stroke="#a9a9a9" strokeWidth="1.600" />
          <circle cx="13" cy="13" r="9" fill="#a9a9a9" />
        </svg>
      </Tool>
      <Tool className="ml-[30px] w-[80px]" label="Reactions" labelClass="w-[65px]">
        <svg viewBox="0 0 26 28" className="mb-[2px] ml-[3px] h-7 w-[26px]">
          <circle cx="11.500" cy="16" r="11.500" fill="#a9a9a9" />
          <path d="M21.500 0v10M16.500 5h10" stroke="#1a1a1a" strokeWidth="5" />
          <path d="M21.500 .5v9M17 5h9" stroke="#a9a9a9" strokeWidth="1.800" />
          <circle cx="8" cy="13.500" r="1.500" fill="#1a1a1a" />
          <circle cx="15" cy="13.500" r="1.500" fill="#1a1a1a" />
          <path d="M7 18c1.500 3.500 7.500 3.500 9 0" stroke="#1a1a1a" strokeWidth="1.800" fill="none" />
        </svg>
      </Tool>
      <button className="ml-[290px] mt-[16px] flex h-[34px] w-[77px] shrink-0 items-center justify-center rounded-[8px] bg-[#b82626] pb-[2px]">
        <Fit className="w-[40px] text-[15px] font-bold text-white">Leave</Fit>
      </button>
    </div>
  );
}

const chat = [
  { from: "", fw: "", msgs: [{ t: "Can you hear me better now?", w: "w-[248px]" }] },
  { from: "Matias Tekoniemi", fw: "w-[251px]", msgs: [{ t: "Nope, can’t hear much at all", w: "w-[236px]" }] },
  { from: "Matias Koponen", fw: "w-[244px]", msgs: [{ t: "At least I can't really hear you", w: "w-[247px]" }] },
  { from: "L", fw: "w-[139px]", msgs: [{ t: "same", w: "w-[44px]" }] },
  { from: "Jaakko Pere", fw: "w-[212px]", msgs: [{ t: "wait i try to join again", w: "w-[183px]" }] },
  { from: "Oscar Löfqvist", fw: "w-[230px]", msgs: [{ t: "same", w: "w-[44px]" }] },
  { from: "L", fw: "w-[139px]", msgs: [{ t: "yes", w: "w-[27px]" }, { t: "yes", w: "w-[27px]" }] },
  { from: "Lauri Anttila", fw: "w-[215px]", msgs: [{ t: "Yea", w: "w-[31px]" }] },
];

function ChatPanel() {
  return (
    <section className="flex w-[481px] shrink-0 flex-col bg-white">
      <div className="flex h-[58px] items-center pb-[2px]">
        <ChevronDown className="ml-[22px] h-[15px] w-[15px] shrink-0 text-[#6e7080]" strokeWidth={2.8} />
        <Fit className="ml-[186px] w-[35px] text-[15px] font-bold text-[#3c3d42]">Chat</Fit>
      </div>
      <div className="flex h-[760px] justify-between pl-[24px] pr-[3px]">
        <div className="flex flex-col items-start pt-[9px]">
          {chat.map((c, i) => (
            <div key={i} className="flex flex-col items-start">
              {c.from && (
                <Fit className={`mb-[8px] mt-[15px] text-[15px] leading-[22px] text-[#747487] ${c.fw}`}>
                  From <span className="text-[#0e71eb]">{c.from}</span> to <span className="text-[#0e71eb]">Everyone</span>:
                </Fit>
              )}
              <div className="flex flex-col items-start gap-[6px]">
                {c.msgs.map((m, j) => (
                  <div key={j} className="flex h-[46px] items-center rounded-[15px] bg-[#f2f2f7] pb-[1px] pl-[13px] pr-[14px] text-[18px] text-[#444]">
                    <Fit className={m.w}>{m.t}</Fit>
                  </div>
                ))}
              </div>
            </div>
          ))}
        </div>
        <div className="h-[757px] w-[10px] rounded-full bg-[#f3f3f7] pt-[161px]">
          <div className="h-[596px] rounded-full bg-[#adadb8]" />
        </div>
      </div>
      <div className="flex h-[31px] shrink-0 items-center border-b border-[#e8e8f0] bg-[#f7f7fb]">
        <svg viewBox="0 0 18 18" className="ml-[134px] h-[18px] w-[18px] shrink-0" fill="none" stroke="#747487" strokeWidth="1.300">
          <circle cx="7" cy="4" r="3.300" />
          <path d="M8 15.500h-7.300c0-3.500 1.500-6 6.300-6h2" />
          <path d="M12.700 8.500l4.300 1.700v3c0 2.500-2 4-4.300 5-2.300-1-4.300-2.500-4.300-5v-3z" fill="#0e71eb" stroke="none" />
        </svg>
        <Fit className="ml-[5px] w-[194px] text-[15px] text-[#8c8c99]">Who can see your messages?</Fit>
      </div>
      <div className="mt-[16px] flex h-[29px] shrink-0 items-center">
        <Fit className="ml-[21px] w-[19px] pb-[2px] text-[15px] text-[#3c3d42]">To:</Fit>
        <div className="ml-[11px] flex h-[29px] w-[90px] items-center rounded-[7px] bg-[#f2f2f7] pl-[9px] text-[#232333]">
          <Fit className="w-[56px] text-[14px]">Everyone</Fit>
          <ChevronDown className="ml-[3px] h-[13px] w-[13px]" strokeWidth={3.2} />
        </div>
        <svg viewBox="0 0 16 18" className="mb-[3px] ml-[241px] h-[18px] w-4 shrink-0" fill="none" stroke="#747487" strokeWidth="1.300">
          <path d="M4 .8h6.500l4.800 5v8.400a3 3 0 0 1-3 3h-8.300a3 3 0 0 1-3-3v-10.400a3 3 0 0 1 3-3zM10 1v3a2 2 0 0 0 2 2h3" />
        </svg>
        <svg viewBox="0 0 18 18" className="mb-[3px] ml-[11px] h-[18px] w-[18px] shrink-0" fill="none" stroke="#747487" strokeWidth="1.200">
          <circle cx="9" cy="9" r="8" />
          <path d="M5 10.500c1.500 3 6.500 3 8 0z" />
          <circle cx="6.300" cy="6.700" r=".8" fill="#747487" />
          <circle cx="11.700" cy="6.700" r=".8" fill="#747487" />
        </svg>
        <span className="mb-[3px] ml-[15px] flex gap-[2px]">
          <i className="h-[3px] w-[3px] rounded-full bg-[#747487]" />
          <i className="h-[3px] w-[3px] rounded-full bg-[#747487]" />
          <i className="h-[3px] w-[3px] rounded-full bg-[#747487]" />
        </span>
      </div>
      <Fit className="ml-[21px] mt-[7px] w-[144px] text-[15px] leading-[22px] text-[#747487]">Type message here...</Fit>
    </section>
  );
}

function TaskSlot({ active, split, children }: { active?: boolean; split?: boolean; children: ReactNode }) {
  return (
    <div className={`flex h-[50px] w-[62px] shrink-0 flex-col items-center ${active ? "bg-[#4b4b4b]" : ""}`}>
      <div className="flex h-[47px] items-center justify-center pt-[3px]">{children}</div>
      <div className={`flex h-[3px] justify-end bg-[#76b9ed] ${active ? "w-full" : "w-[51px]"}`}>
        {split && <span className="h-full w-[10px] bg-[#5586ab]" />}
      </div>
    </div>
  );
}

function Taskbar() {
  return (
    <footer className="flex h-[50px] items-center bg-[#1d1c1c] text-white">
      <svg viewBox="0 0 20 20" className="ml-[20px] h-5 w-5 shrink-0 fill-white">
        <path d="M0 3l8.200-1.200v7.700h-8.200zM9.200 1.600l10.800-1.600v9.500h-10.800zM0 10.500h8.200v7.700l-8.200-1.200zM9.200 10.500h10.800v9.500l-10.800-1.600z" />
      </svg>
      <svg viewBox="0 0 20 20" className="ml-[40px] h-5 w-5 shrink-0" fill="none" stroke="#fff" strokeWidth="1.500">
        <circle cx="12.800" cy="7" r="6.300" />
        <path d="M8.500 11.500l-8 8" />
      </svg>
      <div className="ml-[23px] flex">
        <TaskSlot split>
          <svg viewBox="0 0 28 24" className="h-6 w-7">
            <path d="M0 2a1.500 1.500 0 0 1 1.500-1.500h9l2.500 2.500h14.500v4h-27.500z" fill="#e2a50e" />
            <path d="M0 5l13-2h14.500v19.500h-27.500z" fill="#fcd462" />
            <path d="M5 23.500v-8.500a2 2 0 0 1 2-2h14a2 2 0 0 1 2 2v8.500h-5v-5h-8v5z" fill="#3a96dd" />
          </svg>
        </TaskSlot>
        <TaskSlot>
          <svg viewBox="0 0 30 30" className="h-[30px] w-[30px]">
            <path fillRule="evenodd" d="M15 .5a14.500 14.500 0 1 1 0 29 14.500 14.500 0 0 1 0-29zM15 4.500c-3.800 0-6 4.800-6 10.500s2.200 10.500 6 10.500 6-4.800 6-10.500-2.200-10.500-6-10.500z" fill="#e0162b" />
            <path d="M15 4.500c4-1.500 7-1 10 1.500a14.500 14.500 0 0 1 0 18c-3 2.500-6 3-10 1.500 3.800 0 6-4.800 6-10.500s-2.200-10.500-6-10.500z" fill="#f5564f" />
          </svg>
        </TaskSlot>
        <TaskSlot>
          <svg viewBox="0 0 30 30" className="h-[30px] w-[30px]">
            <path d="M0 0h23l7 7v23h-30z" fill="#f58a1f" />
            <path d="M23 0v7h7z" fill="#1d1c1c" />
            <path d="M24.500 0l5.500 5.500v-5.500z" fill="#f58a1f" />
            <path d="M15 4l11 11-11 8-11-8z" fill="#f9a14d" />
            <path fillRule="evenodd" d="M21 5c-8-1.500-14 3-14 9 0 5 4 7.500 8 6.500 4-.5 6-3.500 5-6.500 1-1 1.500-2 1.500-3.500h-5.500c-2 0-4 1.500-4 3.500 0 1.500 1 2.500 3 2.500-2.500 2-5.500 1-5.500-2.500 0-3.500 3-6 7-6.500 2-.3 3.500-1 4.500-2.500z" fill="#fff" />
            <text x="15" y="27.500" textAnchor="middle" fontFamily="Open Sans" fontWeight="800" fontSize="6.500" fill="#fff">PDF</text>
          </svg>
        </TaskSlot>
        <TaskSlot active><ZoomLogo className="h-[30px] w-[30px]" /></TaskSlot>
        <TaskSlot>
          <svg viewBox="0 0 28 28" className="h-7 w-7">
            <rect width="28" height="28" fill="#2bb2ee" />
            <path d="M14 20l6-7 8 9v6h-14z" fill="#4a6fd4" />
            <path d="M28 8v14l-6-7z" fill="#6a8ae6" />
            <path d="M0 19c5-6 6-9 9-9s7 8 19 18h-28z" fill="#154588" />
            <circle cx="18.500" cy="6.500" r="2.700" fill="#fff" />
          </svg>
        </TaskSlot>
      </div>
      <svg viewBox="0 0 18 10" className="ml-[1110px] h-[10px] w-[18px] shrink-0" fill="none" stroke="#fff" strokeWidth="1.500">
        <path d="M1 9l8-8 8 8" />
      </svg>
      <svg viewBox="0 0 14 20" className="ml-[14px] h-5 w-[14px] shrink-0">
        <rect x="3" y="0" width="8" height="14" rx="1" fill="#fff" />
        <path d="M1 10v3.500c0 3 12 3 12 0v-3.500M7 16v3M3.500 19.500h7" stroke="#fff" strokeWidth="1.200" fill="none" />
      </svg>
      <svg viewBox="0 0 21 21" className="ml-[13px] h-[21px] w-[21px] shrink-0" fill="none" stroke="#fff" strokeWidth="1.200">
        <path d="M1 3.500l19-2.500v18l-19-2z" />
        <path d="M6 9c0-3 5-4 7-1.500M13.500 5v3h-3M14 11c0 3-5 4-7 1.500M6.500 15v-3h3" />
        <circle cx="15.500" cy="16" r="4.500" fill="#ff9500" stroke="none" />
      </svg>
      <svg viewBox="0 0 20 12" className="ml-[10px] h-3 w-5 shrink-0">
        <path d="M.7.700h16.600v10.600h-16.600zM18 4h1.500v4h-1.500" stroke="#fff" strokeWidth="1.300" fill="none" />
        <path d="M3 3h8.500v6h-8.500z" fill="#fff" />
      </svg>
      <svg viewBox="0 0 16 16" className="ml-[12px] h-4 w-4 shrink-0" fill="none" stroke="#fff" strokeWidth="1.200">
        <path d="M1 15c0-8 6-14 14-14" stroke="#999" />
        <path d="M4.500 15c0-6 4.500-10.500 10.500-10.500M8 15c0-4 3-7 7-7M11 15c0-2 2-4 4-4" />
        <circle cx="14" cy="14" r="1.500" fill="#fff" stroke="none" />
      </svg>
      <svg viewBox="0 0 21 18" className="ml-[11px] h-[18px] w-[21px] shrink-0" fill="none" stroke="#fff" strokeWidth="1.200">
        <path d="M1 6h2.500l4-4v14l-4-4h-2.500zM10.500 6.500c1 1.500 1 3.500 0 5M13.500 4.500c2 3 2 6 0 9" />
        <path d="M17 1.500c3 5 3 10 0 15" stroke="#777" />
      </svg>
      <Fit className="ml-[13px] w-[29px] text-[14px]">ENG</Fit>
      <div className="ml-[16px] flex w-[75px] shrink-0 flex-col items-center text-[14px] leading-[23px]">
        <Fit className="w-[35px]">14.40</Fit>
        <Fit className="w-[75px]">15/11/2021</Fit>
      </div>
      <div className="relative ml-[24px] h-5 w-5 shrink-0">
        <svg viewBox="0 0 20 20" className="h-5 w-5">
          <path d="M0 0h20v16h-11l-4 4v-4h-5z" fill="#fff" />
          <path d="M4 4.500h12M4 8h12M4 11.500h8" stroke="#1d1c1c" strokeWidth="1.200" />
        </svg>
        <span className="absolute left-[9px] top-[9px] flex h-[21px] w-[21px] items-center justify-center rounded-full border border-[#8a8a8a] bg-[#3b3b3b] text-[13px] font-semibold leading-none">3</span>
      </div>
      <span className="ml-[25px] h-full w-px bg-[#666]" />
    </footer>
  );
}

export default function App() {
  return (
    <div className="h-[1080px] w-[1920px] overflow-hidden bg-[#1a1a1a] font-['Open_Sans','Noto_Sans',sans-serif]">
      <TitleBar />
      <div className="flex h-[1001px]">
        <main className="flex w-[1439px] shrink-0 flex-col">
          <Gallery />
          <SharedScreen />
          <MeetingToolbar />
        </main>
        <ChatPanel />
      </div>
      <Taskbar />
    </div>
  );
}
